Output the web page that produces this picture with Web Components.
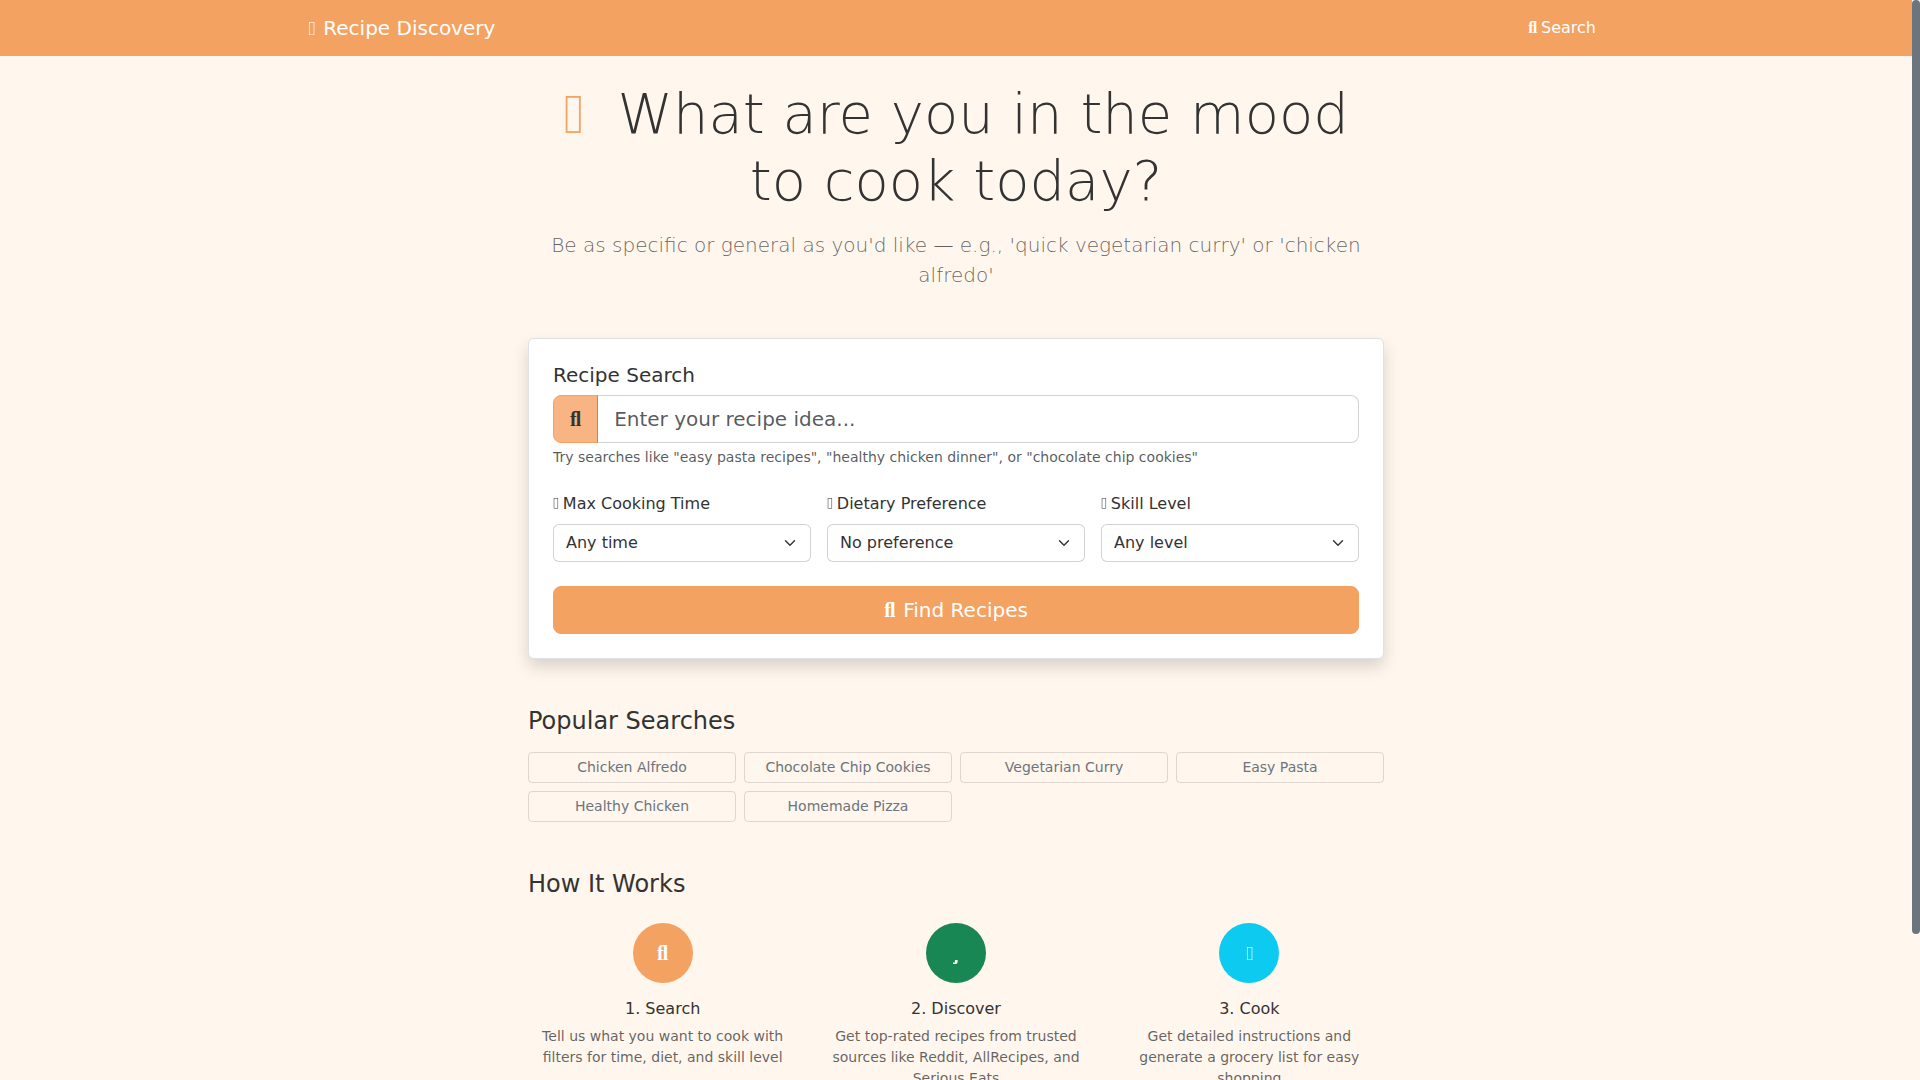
<!DOCTYPE html>
<html lang="en">
<head>
<meta charset="utf-8">
<meta name="viewport" content="width=device-width, initial-scale=1">
<title>Recipe Discovery</title>
<style>
    :root {
        --primary: #f4a261;
        --primary-light: #f8b583;
        --page-bg: #fff6ed;
        --text: #333333;
        --muted: rgba(33, 37, 41, 0.75);
        --muted-warm: rgba(51, 51, 51, 0.75);
        --field-border: rgba(0, 0, 0, 0.175);
        scrollbar-width: none;
    }

    body {
        margin: 0;
        padding-right: 8px;
        background-color: var(--page-bg);
        color: var(--text);
        font-family: "DejaVu Sans", sans-serif;
        font-size: 16px;
        line-height: 24px;
    }

    main {
        max-width: 856px;
        margin: 0 auto;
        padding: 24px 12px 160px;
    }
</style>
</head>
<body>

<nav-bar></nav-bar>

<main>
    <page-hero>
        <span slot="title">What are you in the mood to cook today?</span>
        Be as specific or general as you'd like — e.g., 'quick vegetarian curry' or 'chicken alfredo'
    </page-hero>

    <search-card></search-card>

    <page-section heading="Popular Searches">
        <search-chips>
            <search-chip>Chicken Alfredo</search-chip>
            <search-chip>Chocolate Chip Cookies</search-chip>
            <search-chip>Vegetarian Curry</search-chip>
            <search-chip>Easy Pasta</search-chip>
            <search-chip>Healthy Chicken</search-chip>
            <search-chip>Homemade Pizza</search-chip>
        </search-chips>
    </page-section>

    <page-section heading="How It Works">
        <step-list>
            <step-item icon="search" color="#f4a261" heading="1. Search">Tell us what you want to cook with filters for time, diet, and skill level</step-item>
            <step-item icon="star" color="#198754" heading="2. Discover">Get top-rated recipes from trusted sources like Reddit, AllRecipes, and Serious Eats</step-item>
            <step-item icon="box" color="#0dcaf0" heading="3. Cook">Get detailed instructions and generate a grocery list for easy shopping</step-item>
        </step-list>
    </page-section>
</main>

<scroll-thumb></scroll-thumb>

<script>
const ICONS = {
    search: '&#xfb02;',
    star: '<svg class="star" viewBox="0 0 5 4"><path d="M2 0h2.6v2.3L3.4 4H0V2.5h1.8z" fill="currentColor"/></svg>',
    box: '<svg class="box" viewBox="0 0 365 660"><rect x="64" y="16" width="237" height="628" fill="none" stroke="currentColor" stroke-width="32"/></svg>'
};

class FaIcon extends HTMLElement {
    constructor() {
        super();
        this.attachShadow({ mode: 'open' });
        this.shadowRoot.innerHTML = /*html*/`
            <style>
            :host {
                display: inline-block;
                font-family: "Liberation Serif", serif;
                font-weight: 900;
                line-height: 1;
            }
            .box {
                width: 0.365em;
                height: 0.66em;
            }
            .star {
                width: 5px;
                height: 4px;
                vertical-align: -4px;
            }
            </style>
            <span aria-hidden="true">${ICONS[this.getAttribute('name')]}</span>
        `;
    }
}
customElements.define('fa-icon', FaIcon);


class NavBar extends HTMLElement {
    constructor() {
        super();
        this.attachShadow({ mode: 'open' });
        this.shadowRoot.innerHTML = /*html*/`
            <style>
            :host {
                display: block;
                background-color: var(--primary);
            }
            nav {
                display: flex;
                align-items: center;
                justify-content: space-between;
                max-width: 1296px;
                margin: 0 auto;
                padding: 8px 12px;
            }
            a {
                color: #ffffff;
                text-decoration: none;
            }
            .brand {
                font-size: 20px;
                line-height: 30px;
                padding: 5px 0;
            }
            .brand fa-icon { margin-right: 8px; }
            .link { padding: 8px; }
            .link fa-icon { margin-right: 4px; }
            </style>
            <nav>
                <a class="brand" href="#"><fa-icon name="box"></fa-icon>Recipe Discovery</a>
                <a class="link" href="#"><fa-icon name="search"></fa-icon>Search</a>
            </nav>
        `;
    }
}
customElements.define('nav-bar', NavBar);


class PageHero extends HTMLElement {
    constructor() {
        super();
        this.attachShadow({ mode: 'open' });
        this.shadowRoot.innerHTML = /*html*/`
            <style>
            :host {
                display: block;
                text-align: center;
                margin-bottom: 48px;
            }
            h1 {
                margin: 0 0 16px;
                font-size: 56px;
                font-weight: 300;
                line-height: 67px;
            }
            h1 fa-icon {
                color: var(--primary);
                margin-right: 16px;
            }
            p {
                margin: 0;
                color: var(--muted-warm);
                font-size: 20px;
                font-weight: 300;
                line-height: 30px;
            }
            </style>
            <h1><fa-icon name="box"></fa-icon> <slot name="title"></slot></h1>
            <p><slot></slot></p>
        `;
    }
}
customElements.define('page-hero', PageHero);


class FilterSelect extends HTMLElement {
    constructor() {
        super();
        this.attachShadow({ mode: 'open' });
        this.shadowRoot.innerHTML = /*html*/`
            <style>
            :host { display: block; }
            label {
                display: block;
                margin-bottom: 8px;
            }
            label fa-icon { margin-right: 4px; }
            select {
                appearance: none;
                display: block;
                box-sizing: border-box;
                width: 100%;
                margin: 0;
                padding: 6px 36px 6px 12px;
                border: 1px solid var(--field-border);
                border-radius: 6px;
                background: #ffffff url("data:image/svg+xml,%3csvg xmlns='http://www.w3.org/2000/svg' viewBox='0 0 16 16'%3e%3cpath fill='none' stroke='%23343a40' stroke-linecap='round' stroke-linejoin='round' stroke-width='2' d='m2 5 6 6 6-6'/%3e%3c/svg%3e") no-repeat right 12px center / 16px 12px;
                color: var(--text);
                font: inherit;
            }
            </style>
            <label for="filter"><fa-icon name="box"></fa-icon>${this.getAttribute('label')}</label>
            <select id="filter">
                ${this.getAttribute('options').split(',').map(o => `<option>${o}</option>`).join('')}
            </select>
        `;
    }
}
customElements.define('filter-select', FilterSelect);


class SearchCard extends HTMLElement {
    constructor() {
        super();
        this.attachShadow({ mode: 'open' });
        this.shadowRoot.innerHTML = /*html*/`
            <style>
            :host {
                display: block;
                padding: 24px;
                background-color: #ffffff;
                border: 1px solid #dee2e6;
                border-radius: 6px;
                box-shadow: 0 8px 16px rgba(0, 0, 0, 0.15);
            }
            .title {
                display: block;
                margin-bottom: 8px;
                font-size: 20px;
                line-height: 24px;
            }
            .group {
                display: flex;
                font-size: 20px;
            }
            .addon {
                display: flex;
                align-items: center;
                padding: 8px 16px;
                background-color: var(--primary-light);
                border: 1px solid var(--primary);
                border-radius: 8px 0 0 8px;
            }
            input {
                flex: 1;
                min-width: 0;
                margin: 0 0 0 -1px;
                padding: 8px 16px;
                border: 1px solid var(--field-border);
                border-radius: 0 8px 8px 0;
                background: #ffffff;
                background-clip: padding-box;
                color: var(--text);
                font: inherit;
                line-height: 30px;
                height: 30px;
            }
            input::placeholder {
                color: var(--muted);
                opacity: 1;
            }
            .hint {
                margin-top: 4px;
                color: var(--muted);
                font-size: 14px;
                line-height: 21px;
            }
            .filters {
                display: grid;
                grid-template-columns: repeat(3, 1fr);
                gap: 16px;
                margin: 24px 0;
            }
            button {
                display: block;
                width: 100%;
                padding: 8px 16px;
                border: 1px solid var(--primary);
                border-radius: 8px;
                background-color: var(--primary);
                color: #ffffff;
                font: inherit;
                font-size: 20px;
                line-height: 30px;
            }
            button fa-icon { margin-right: 8px; }
            </style>
            <form>
                <label class="title" for="query">Recipe Search</label>
                <div class="group">
                    <span class="addon"><fa-icon name="search"></fa-icon></span>
                    <input id="query" type="text" placeholder="Enter your recipe idea...">
                </div>
                <div class="hint">Try searches like "easy pasta recipes", "healthy chicken dinner", or "chocolate chip cookies"</div>
                <div class="filters">
                    <filter-select label="Max Cooking Time" options="Any time,15 minutes,30 minutes,1 hour"></filter-select>
                    <filter-select label="Dietary Preference" options="No preference,Vegetarian,Vegan,Gluten-free"></filter-select>
                    <filter-select label="Skill Level" options="Any level,Beginner,Intermediate,Advanced"></filter-select>
                </div>
                <button type="button"><fa-icon name="search"></fa-icon>Find Recipes</button>
            </form>
        `;
    }
}
customElements.define('search-card', SearchCard);


class PageSection extends HTMLElement {
    constructor() {
        super();
        this.attachShadow({ mode: 'open' });
        this.shadowRoot.innerHTML = /*html*/`
            <style>
            :host {
                display: block;
                margin-top: 48px;
            }
            h2 {
                margin: 0 0 16px;
                font-size: 24px;
                font-weight: 400;
                line-height: 29px;
            }
            </style>
            <h2>${this.getAttribute('heading')}</h2>
            <slot></slot>
        `;
    }
}
customElements.define('page-section', PageSection);


class SearchChips extends HTMLElement {
    constructor() {
        super();
        this.attachShadow({ mode: 'open' });
        this.shadowRoot.innerHTML = /*html*/`
            <style>
            :host {
                display: grid;
                grid-template-columns: repeat(4, 1fr);
                gap: 8px;
            }
            </style>
            <slot></slot>
        `;
    }
}
customElements.define('search-chips', SearchChips);


class SearchChip extends HTMLElement {
    constructor() {
        super();
        this.attachShadow({ mode: 'open' });
        this.shadowRoot.innerHTML = /*html*/`
            <style>
            :host { display: block; }
            button {
                display: block;
                width: 100%;
                padding: 4px 8px;
                border: 1px solid rgba(0, 0, 0, 0.125);
                border-radius: 4px;
                background: transparent;
                color: #6c757d;
                font: inherit;
                font-size: 14px;
                line-height: 21px;
            }
            </style>
            <button type="button"><slot></slot></button>
        `;
    }
}
customElements.define('search-chip', SearchChip);


class StepList extends HTMLElement {
    constructor() {
        super();
        this.attachShadow({ mode: 'open' });
        this.shadowRoot.innerHTML = /*html*/`
            <style>
            :host {
                display: grid;
                grid-template-columns: repeat(3, 1fr);
                gap: 24px;
                padding-top: 8px;
            }
            </style>
            <slot></slot>
        `;
    }
}
customElements.define('step-list', StepList);


class StepItem extends HTMLElement {
    constructor() {
        super();
        this.attachShadow({ mode: 'open' });
        this.shadowRoot.innerHTML = /*html*/`
            <style>
            :host {
                display: block;
                text-align: center;
            }
            .circle {
                display: flex;
                align-items: center;
                justify-content: center;
                width: 60px;
                height: 60px;
                margin: 0 auto 16px;
                border-radius: 50%;
                background-color: ${this.getAttribute('color')};
                color: #ffffff;
                font-size: 20px;
            }
            h3 {
                margin: 0 0 8px;
                font-size: 16px;
                font-weight: 400;
                line-height: 19px;
            }
            p {
                margin: 0;
                color: var(--muted-warm);
                font-size: 14px;
                line-height: 21px;
            }
            </style>
            <div class="circle"><fa-icon name="${this.getAttribute('icon')}"></fa-icon></div>
            <h3>${this.getAttribute('heading')}</h3>
            <p><slot></slot></p>
        `;
    }
}
customElements.define('step-item', StepItem);


class ScrollThumb extends HTMLElement {
    constructor() {
        super();
        this.attachShadow({ mode: 'open' });
        this.shadowRoot.innerHTML = /*html*/`
            <style>
            :host {
                position: fixed;
                top: 0;
                right: 0;
                width: 8px;
                height: 100vh;
                background-color: var(--page-bg);
            }
            .thumb {
                background-color: #6c757d;
                border-radius: 4px;
            }
            </style>
            <div class="thumb"></div>
        `;
    }

    connectedCallback() {
        this.update();
        window.addEventListener('scroll', () => this.update());
    }

    update() {
        const thumb = this.shadowRoot.querySelector('.thumb');
        const ratio = window.innerHeight / document.documentElement.scrollHeight;
        thumb.style.height = `${Math.round(ratio * window.innerHeight)}px`;
        thumb.style.transform = `translateY(${Math.round(ratio * window.scrollY)}px)`;
    }
}
customElements.define('scroll-thumb', ScrollThumb);
</script>
</body>
</html>
